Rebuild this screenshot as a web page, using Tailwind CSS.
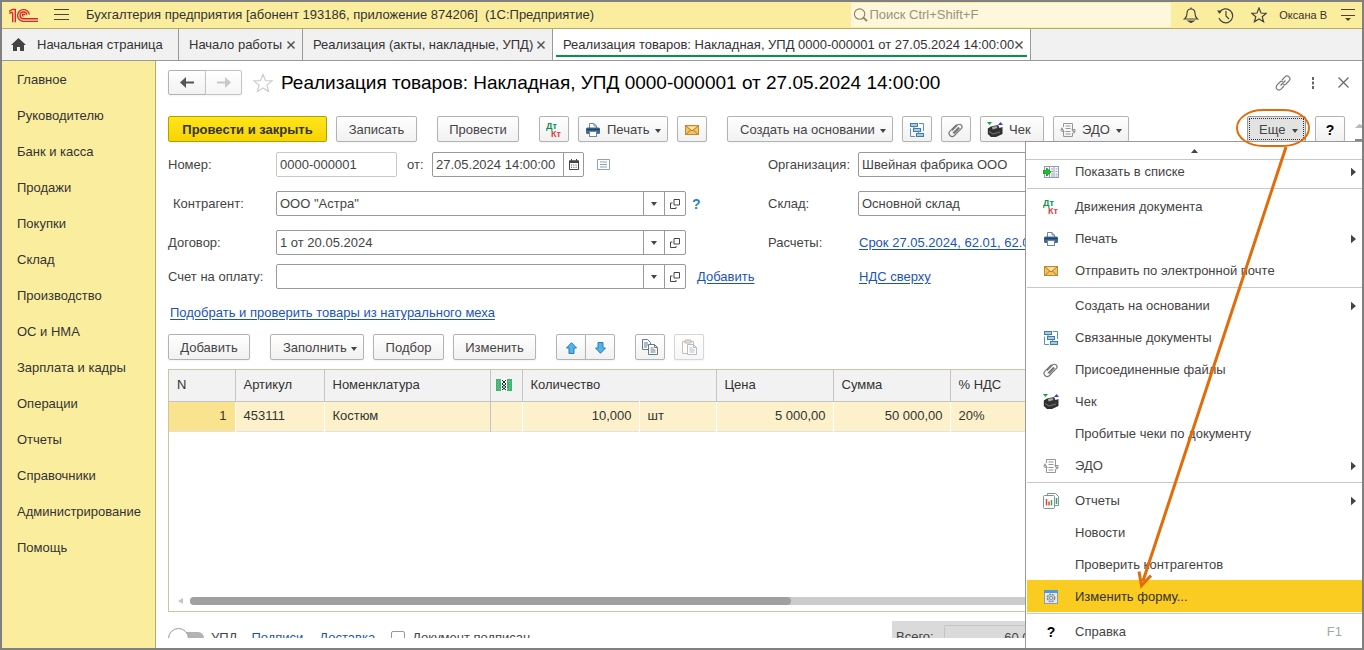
<!DOCTYPE html>
<html lang="ru">
<head>
<meta charset="utf-8">
<title>Бухгалтерия предприятия</title>
<script src="https://cdn.jsdelivr.net/npm/@tailwindcss/browser@4"></script>
</head>
<body class="h-screen overflow-hidden bg-white font-['Liberation_Sans',Arial,sans-serif] text-[13px] leading-4 text-[#444444]">
<svg class="hidden">
  <symbol id="i-dtkt" viewBox="0 0 16 16"><text x="0" y="7" font-size="9" font-weight="bold" font-family="Liberation Sans, sans-serif" fill="#0a9150">Дт</text><text x="5" y="15" font-size="9" font-weight="bold" font-family="Liberation Sans, sans-serif" fill="#e0403c">Кт</text></symbol>
  <symbol id="i-print" viewBox="0 0 16 16"><path d="M4.500 6V1.500h4.500l2.500 2.500v2" fill="#fff" stroke="#6f86a3"/><path d="M9 1.500V4h2.500" fill="none" stroke="#6f86a3"/><rect x="1" y="5.500" width="14" height="6.500" rx="1.500" fill="#3f6a94"/><path d="M1.500 7.500h13" stroke="#1d4468" stroke-width="1.500"/><rect x="4.500" y="9.500" width="7" height="5" fill="#fff" stroke="#6f86a3"/></symbol>
  <symbol id="i-mail" viewBox="0 0 16 16"><rect x="1.500" y="3.500" width="13" height="9" fill="#f5c263" stroke="#c08a33"/><path d="M3 4.500h10L8 8.500z" fill="#fde2a4"/><path d="M2 4l6 5 6-5M2 12.500l4.500-4.500M14 12.500L9.500 8" fill="none" stroke="#b27a26"/></symbol>
  <symbol id="i-rel" viewBox="0 0 16 16"><g fill="#a9cbe6" stroke="#3f7cab"><rect x="1.500" y="1.500" width="7" height="3"/><rect x="4.500" y="6.500" width="7" height="3"/><rect x="7.500" y="11.500" width="7" height="3"/></g><path d="M10 1.500h4.500V9M1.500 6.500v8H6M5 4.500v2M9.500 9.500v2" fill="none" stroke="#5a92bd"/></symbol>
  <symbol id="i-clip" viewBox="0 0 16 16"><path d="M4 8.500l5.500-5.500a2.600 2.600 0 0 1 3.700 3.700l-6.800 6.800a3.100 3.100 0 0 1-4.400-4.400L8.500 2.600M4.800 11.200l6-6M6 11.500l5.500-5.500" fill="none" stroke="#777" stroke-width="1.200"/></symbol>
  <symbol id="i-chek" viewBox="0 0 16 16"><path d="M4 4.500l7-1.500 1.500 3 3-1v7L9 15H4L.8 12V6.500z" fill="#303030"/><path d="M5 5l4.500-1 1 2-5 1.500z" fill="#a8a8a8"/><path d="M2 9.500l4 2.500 7-2" fill="none" stroke="#777"/><path d="M0 0h5L2.500 3z" fill="#12a04c"/><path d="M11 3h5L13.500 0z" fill="#3540c9"/></symbol>
  <symbol id="i-edo" viewBox="0 0 16 16" fill="none" stroke="#979797"><path d="M3.500 5V1.500h9V9M12.500 11v3.500h-9V8M5.500 4h5M5.500 6.500h5M5.500 9.500h5M5.500 12h5"/><path d="M1.500 9.500h3M11.500 7.500h4"/><path d="M0 8.500h4L2 5zM12 8.500h4L14 12z" fill="#979797" stroke="none"/></symbol>
  <symbol id="i-list" viewBox="0 0 16 16"><rect x="1.500" y="2.500" width="14" height="11" fill="#fff" stroke="#8b9cb5"/><path d="M6.500 2.500v11M11 2.500v11M3 5h2M8 5h2M12.500 5h2M8 7.500h2M12.500 7.500h2M3 11.500h2M8 10h2M12.500 10h2M8 12h2M12.500 12h2" stroke="#8b9cb5"/><path d="M0 6.500h3.500V4L8 8l-4.500 4V9.500H0z" fill="#17c41c" stroke="#0d7a15" stroke-width=".6"/></symbol>
  <symbol id="i-rep" viewBox="0 0 16 16"><path d="M4.500 3V.5h8l3 3v9H12" fill="#fff" stroke="#7e90a3"/><rect x=".5" y="2.500" width="11" height="13" rx="1" fill="#fff" stroke="#7e90a3"/><path d="M3.500 6v6.500" stroke="#e2443b" stroke-width="1.500"/><path d="M6 8.500v4" stroke="#e2443b" stroke-width="1.500"/><path d="M8.500 7v5.500M13.500 5v6" stroke="#3aa655" stroke-width="1.500"/></symbol>
  <symbol id="i-form" viewBox="0 0 16 16"><rect x="1.500" y="1.500" width="13" height="13" fill="#e6e9ec" stroke="#8f9cab"/><path d="M1 1h14v3H1z" fill="#4f9be0"/><circle cx="8" cy="9" r="3.700" fill="#c9ced4" stroke="#7f8a96" stroke-width="1.400" stroke-dasharray="2 1"/><circle cx="8" cy="9" r="1.500" fill="#fff" stroke="#7f8a96"/></symbol>
  <symbol id="i-open" viewBox="0 0 10 10"><path d="M4 .5h5.500V6H4zM2.500 4H.5v5.500H6V8" fill="none" stroke="#444"/></symbol>
  <symbol id="i-down" viewBox="0 0 6 4"><path d="M0 0h6L3 4z" fill="#444"/></symbol>
  <symbol id="i-x" viewBox="0 0 10 10"><path d="M1.500 1.500l7 7M8.500 1.500l-7 7" stroke="#555" stroke-width="1.500"/></symbol>
  <symbol id="i-right" viewBox="0 0 6 10"><path d="M0 0l6 5-6 5z" fill="#444"/></symbol>
</svg>

<div class="relative flex h-full flex-col border-2 border-[#808080]">
  <header class="flex h-[27px] shrink-0 items-center border-b border-[#b5a96c] bg-[#fbed9e] text-[#333333]">
    <svg class="ml-[7px] h-[15px] w-[30px]" viewBox="0 0 30 15" fill="none" stroke="#d8262c" stroke-width="1.400"><path d="M0 3.500L3 1.600M.3 5.300L3.500 4M3.700 4.500V14.300M3 1.500h3.300V14.300"/><path d="M20.300 6.500A5.900 5.900 0 1 0 14.500 13.400H29M17.800 6.800A3.400 3.400 0 1 0 14.500 10.800H29M15.500 7.200a1 1 0 1 0-1 .9" /></svg>
    <button class="ml-[15px]" aria-label="Меню"><svg class="h-[12px] w-[15px]" viewBox="0 0 15 12" stroke="#444"><path d="M0 .5h15M0 5.500h15M0 10.500h15"/></svg></button>
    <span class="ml-[17px] whitespace-pre">Бухгалтерия предприятия [абонент 193186, приложение 874206]  (1С:Предприятие)</span>
    <label class="ml-auto flex h-[24px] w-[320px] items-center bg-[#fef7dc]">
      <svg class="ml-[2px] h-[16px] w-[16px]" viewBox="0 0 16 16" fill="none" stroke="#8a8468"><circle cx="7" cy="7" r="5.500" stroke-width="1.200"/><path d="M11 11l4 3.500" stroke-width="2"/></svg>
      <input class="ml-px w-full bg-transparent placeholder-[#98937b] outline-none" placeholder="Поиск Ctrl+Shift+F" aria-label="Поиск">
    </label>
    <button class="ml-[12px]" aria-label="Уведомления"><svg class="size-4" viewBox="0 0 16 16" fill="none" stroke="#444" stroke-width="1.200"><path d="M1.500 12c2-1.500 2.500-3 2.500-5.500C4 3.500 5.500 2 8 2s4 1.500 4 4.500c0 2.500.5 4 2.500 5.500z"/><path d="M8 .5V2"/><path d="M5.500 14h5L8 15.500z" fill="#444"/></svg></button>
    <button class="ml-[18px]" aria-label="История"><svg class="size-[17px]" viewBox="0 0 17 17" fill="none" stroke="#444" stroke-width="1.200"><path d="M2.500 5.500A7 7 0 1 1 2 11M9 4v5l3 3"/><path d="M0 3.500h5L2.500 7z" fill="#444" stroke="none"/></svg></button>
    <button class="ml-[17px]" aria-label="Избранное"><svg class="size-4" viewBox="0 0 16 16" fill="none" stroke="#444" stroke-width="1.200"><path d="M8 1l2 5 5.300.3-4.100 3.400 1.400 5.100L8 12l-4.600 2.800 1.400-5.100L.7 6.300 6 6z"/></svg></button>
    <span class="ml-[12px] text-[11px]">Оксана В</span>
    <button class="mr-[7px] ml-[14px]" aria-label="Настройки"><svg class="h-[12px] w-[14px]" viewBox="0 0 14 12"><path d="M0 .5h14M0 6.500h14" stroke="#444"/><path d="M4 9h6l-3 3z" fill="#444"/></svg></button>
  </header>

  <nav class="flex h-[32px] shrink-0 border-b border-[#999999] bg-[#f1f1f1] whitespace-nowrap text-[#333333]">
    <a href="#" class="flex w-[177px] items-center border-r border-[#999999] pl-[9px]"><svg class="mr-[11px] h-[13px] w-[15px]" viewBox="0 0 15 13" fill="#444"><path d="M7.500 0L15 7h-2v6H9V9H6v4H2V7H0z"/></svg>Начальная страница</a>
    <div class="flex w-[124px] items-center justify-between border-r border-[#999999] pr-[6px] pl-[10px]"><a href="#">Начало работы</a><button aria-label="Закрыть"><svg class="size-[10px]"><use href="#i-x"/></svg></button></div>
    <div class="flex w-[250px] items-center justify-between border-r border-[#999999] pr-[6px] pl-[10px]"><a href="#">Реализация (акты, накладные, УПД)</a><button aria-label="Закрыть"><svg class="size-[10px]"><use href="#i-x"/></svg></button></div>
    <div class="flex w-[478px] border-r border-[#999999] bg-white px-[3px] pb-[3px]"><div class="flex flex-1 items-center justify-between border-b-2 border-[#009646] pt-[5px] pl-[7px]"><a href="#">Реализация товаров: Накладная, УПД 0000-000001 от 27.05.2024 14:00:00</a><button class="mr-[3px]" aria-label="Закрыть"><svg class="size-[10px]"><use href="#i-x"/></svg></button></div></div>
  </nav>

  <div class="flex min-h-0 flex-1">
    <aside class="flex w-[154px] shrink-0 flex-col border-r border-[#b5a96c] bg-[#fbed9e] pt-px pl-[15px] text-[#333333]">
      <a href="#" class="flex h-9 items-center">Главное</a>
      <a href="#" class="flex h-9 items-center">Руководителю</a>
      <a href="#" class="flex h-9 items-center">Банк и касса</a>
      <a href="#" class="flex h-9 items-center">Продажи</a>
      <a href="#" class="flex h-9 items-center">Покупки</a>
      <a href="#" class="flex h-9 items-center">Склад</a>
      <a href="#" class="flex h-9 items-center">Производство</a>
      <a href="#" class="flex h-9 items-center">ОС и НМА</a>
      <a href="#" class="flex h-9 items-center">Зарплата и кадры</a>
      <a href="#" class="flex h-9 items-center">Операции</a>
      <a href="#" class="flex h-9 items-center">Отчеты</a>
      <a href="#" class="flex h-9 items-center">Справочники</a>
      <a href="#" class="flex h-9 items-center">Администрирование</a>
      <a href="#" class="flex h-9 items-center">Помощь</a>
    </aside>

    <main class="flex min-w-0 flex-1 flex-col pb-[10px] pl-[12px]">
      <div class="mt-[9px] flex h-[25px] shrink-0 items-center">
        <button class="flex h-[25px] w-[38px] items-center justify-center rounded-l-xs border border-[#b3b3b3] bg-linear-to-b from-white to-[#f1f1f1] shadow-xs" aria-label="Назад"><svg class="h-[11px] w-[14px]" viewBox="0 0 14 11"><path d="M0 5.500L6 0v4.500h8v2H6V11z" fill="#555"/></svg></button>
        <button class="-ml-px flex h-[25px] w-[37px] items-center justify-center rounded-r-xs border border-[#c4c4c4] bg-linear-to-b from-white to-[#f5f5f5] shadow-xs" aria-label="Вперед"><svg class="h-[11px] w-[14px]" viewBox="0 0 14 11"><path d="M14 5.500L8 0v4.500H0v2h8V11z" fill="#c8c8c8"/></svg></button>
        <button class="ml-[11px]" aria-label="В избранное"><svg class="size-5" viewBox="0 0 20 20" fill="none" stroke="#ccc" stroke-width="1.200"><path d="M10 1.500l2.500 6 6.500.4-5.100 4.200 1.700 6.300L10 15l-5.600 3.400 1.700-6.300L1 7.900l6.500-.4z"/></svg></button>
        <h1 class="ml-[8px] text-[19px] leading-6 whitespace-nowrap text-black">Реализация товаров: Накладная, УПД 0000-000001 от 27.05.2024 14:00:00</h1>
        <button class="ml-auto" aria-label="Ссылка"><svg class="size-4" viewBox="0 0 16 16" fill="none" stroke="#777" stroke-width="1.200"><path d="M7 5l3-3.200a2.700 2.700 0 0 1 4 4L11 9a2.700 2.700 0 0 1-3 .5M9 11l-3 3.200a2.700 2.700 0 0 1-4-4L5 7a2.700 2.700 0 0 1 3-.5M5.500 10.500l5-5"/></svg></button>
        <button class="ml-[20px]" aria-label="Еще"><svg class="h-[12px] w-[4px]" viewBox="0 0 4 12" fill="#666"><path d="M1 0h2v3H1zM1 4.500h2v3H1zM1 9h2v3H1z"/></svg></button>
        <button class="mr-[13px] ml-[23px]" aria-label="Закрыть"><svg class="size-[11px]" viewBox="0 0 11 11"><path d="M.5.5l10 10M10.500.5l-10 10" stroke="#666" stroke-width="1.200"/></svg></button>
      </div>

      <div class="mt-[21px] flex h-[26px] shrink-0 gap-[9px] whitespace-nowrap">
        <button class="w-[159px] rounded-xs border border-[#b39f00] bg-linear-to-b from-[#ffe51a] to-[#f7d400] pt-px font-bold text-[#333333] shadow-xs">Провести и закрыть</button>
        <button class="w-[81px] rounded-xs border border-[#b3b3b3] bg-linear-to-b from-white to-[#f1f1f1] pt-px shadow-xs">Записать</button>
        <button class="ml-[11px] w-[82px] rounded-xs border border-[#b3b3b3] bg-linear-to-b from-white to-[#f1f1f1] pt-px shadow-xs">Провести</button>
        <button class="ml-[11px] flex w-[30px] items-center justify-center rounded-xs border border-[#b3b3b3] bg-linear-to-b from-white to-[#f1f1f1] pt-px shadow-xs" aria-label="Движения документа"><svg class="size-4"><use href="#i-dtkt"/></svg></button>
        <button class="flex w-[90px] items-center rounded-xs border border-[#b3b3b3] bg-linear-to-b from-white to-[#f1f1f1] pt-px pl-[6px] shadow-xs"><svg class="mr-[6px] size-4"><use href="#i-print"/></svg>Печать<svg class="mt-[2px] ml-auto mr-[6px] h-[4px] w-[6px]"><use href="#i-down"/></svg></button>
        <button class="flex w-[30px] items-center justify-center rounded-xs border border-[#b3b3b3] bg-linear-to-b from-white to-[#f1f1f1] pt-px shadow-xs" aria-label="Отправить"><svg class="size-4"><use href="#i-mail"/></svg></button>
        <button class="ml-[11px] flex w-[166px] items-center rounded-xs border border-[#b3b3b3] bg-linear-to-b from-white to-[#f1f1f1] pt-px pl-[12px] shadow-xs">Создать на основании<svg class="mt-[2px] ml-auto mr-[6px] h-[4px] w-[6px]"><use href="#i-down"/></svg></button>
        <button class="flex w-[30px] items-center justify-center rounded-xs border border-[#b3b3b3] bg-linear-to-b from-white to-[#f1f1f1] pt-px shadow-xs" aria-label="Связанные документы"><svg class="size-4"><use href="#i-rel"/></svg></button>
        <button class="flex w-[30px] items-center justify-center rounded-xs border border-[#b3b3b3] bg-linear-to-b from-white to-[#f1f1f1] pt-px shadow-xs" aria-label="Присоединенные файлы"><svg class="size-4"><use href="#i-clip"/></svg></button>
        <button class="flex w-[64px] items-center rounded-xs border border-[#b3b3b3] bg-linear-to-b from-white to-[#f1f1f1] pt-px pl-[6px] shadow-xs"><svg class="mr-[6px] size-4"><use href="#i-chek"/></svg>Чек</button>
        <button class="flex w-[76px] items-center rounded-xs border border-[#b3b3b3] bg-linear-to-b from-white to-[#f1f1f1] pt-px pl-[6px] shadow-xs"><svg class="mr-[6px] size-4"><use href="#i-edo"/></svg>ЭДО<svg class="mt-[2px] ml-auto mr-[6px] h-[4px] w-[6px]"><use href="#i-down"/></svg></button>
        <button class="ml-auto flex w-[59px] items-center rounded-xs border border-[#999999] bg-[#e2e2e2] p-px"><span class="flex h-full w-full items-center border border-dotted border-[#333333] pt-px pl-[9px]">Еще<svg class="mt-[2px] ml-auto mr-[5px] h-[4px] w-[6px]"><use href="#i-down"/></svg></span></button>
        <button class="w-[30px] rounded-xs border border-[#b3b3b3] bg-linear-to-b from-white to-[#f1f1f1] pt-px text-[14px] font-bold text-black shadow-xs">?</button>
        <svg class="mt-[8px] h-[18px] w-[8px]" viewBox="0 0 8 18"><path d="M1 4h7V1L5 0z" fill="#bbb"/><path d="M1 15h7v3H1z" fill="#888"/></svg>
      </div>

      <div class="mt-[10px] flex shrink-0">
        <div class="w-[600px] shrink-0">
          <div class="flex h-[25px] items-center">
            <label for="num" class="w-[108px]">Номер:</label>
            <input id="num" class="h-[25px] w-[121px] rounded-xs border border-[#c8c8c8] bg-white px-[3px] outline-none" value="0000-000001">
            <label for="date" class="ml-[10px]">от:</label>
            <div class="ml-auto flex h-[25px] w-[152px] rounded-xs border border-[#999999]">
              <input id="date" class="w-[130px] min-w-0 px-[3px] outline-none" value="27.05.2024 14:00:00">
              <button class="flex flex-1 items-center justify-center border-l border-[#999999]" aria-label="Календарь"><svg class="h-[11px] w-[10px]" viewBox="0 0 10 11"><path d="M.5 2h9v8.500h-9zM2.500 0v2M7.500 0v2" fill="none" stroke="#444"/><path d="M0 1.500h10V4H0z" fill="#444"/><path d="M2 6h6M2 8.300h6" stroke="#444" stroke-dasharray="1 1.300"/></svg></button>
            </div>
            <button class="mr-[158px] ml-[13px]" aria-label="Сведения"><svg class="h-[11px] w-[13px]" viewBox="0 0 13 11"><path d="M.5.5h12v10H.5z" fill="#fff" stroke="#8fa3b8"/><path d="M3 3h7M3 5.500h7M3 8h7" stroke="#8fa3b8"/></svg></button>
          </div>
          <div class="mt-[14px] flex h-[25px] items-center">
            <label for="agent" class="w-[108px] pl-[5px]">Контрагент:</label>
            <div class="flex h-[25px] w-[410px] rounded-xs border border-[#999999]">
              <input id="agent" class="min-w-0 flex-1 px-[3px] outline-none" value="ООО &quot;Астра&quot;">
              <button class="flex w-[21px] items-center justify-center border-l border-[#999999]" aria-label="Выбрать"><svg class="h-[4px] w-[6px]"><use href="#i-down"/></svg></button>
              <button class="flex w-[21px] items-center justify-center border-l border-[#999999]" aria-label="Открыть"><svg class="size-[10px]"><use href="#i-open"/></svg></button>
            </div>
            <a href="#" class="ml-[6px] text-[14px] font-bold text-[#1c86cc]">?</a>
          </div>
          <div class="mt-[14px] flex h-[25px] items-center">
            <label for="contract" class="w-[108px]">Договор:</label>
            <div class="flex h-[25px] w-[410px] rounded-xs border border-[#999999]">
              <input id="contract" class="min-w-0 flex-1 px-[3px] outline-none" value="1 от 20.05.2024">
              <button class="flex w-[21px] items-center justify-center border-l border-[#999999]" aria-label="Выбрать"><svg class="h-[4px] w-[6px]"><use href="#i-down"/></svg></button>
              <button class="flex w-[21px] items-center justify-center border-l border-[#999999]" aria-label="Открыть"><svg class="size-[10px]"><use href="#i-open"/></svg></button>
            </div>
          </div>
          <div class="mt-[9px] flex h-[25px] items-center">
            <label for="bill" class="w-[108px] whitespace-nowrap">Счет на оплату:</label>
            <div class="flex h-[25px] w-[410px] rounded-xs border border-[#999999]">
              <input id="bill" class="min-w-0 flex-1 px-[3px] outline-none" value="">
              <button class="flex w-[21px] items-center justify-center border-l border-[#999999]" aria-label="Выбрать"><svg class="h-[4px] w-[6px]"><use href="#i-down"/></svg></button>
              <button class="flex w-[21px] items-center justify-center border-l border-[#999999]" aria-label="Открыть"><svg class="size-[10px]"><use href="#i-open"/></svg></button>
            </div>
            <a href="#" class="ml-[11px] text-[#1a55b5] underline underline-offset-2">Добавить</a>
          </div>
        </div>
        <div class="min-w-0 flex-1 pr-[18px]">
          <div class="flex h-[25px] items-center">
            <label for="org" class="w-[90px] shrink-0">Организация:</label>
            <input id="org" class="h-[25px] w-full rounded-xs border border-[#999999] px-[3px] outline-none" value="Швейная фабрика ООО">
          </div>
          <div class="mt-[14px] flex h-[25px] items-center">
            <label for="stock" class="w-[90px] shrink-0">Склад:</label>
            <input id="stock" class="h-[25px] w-full rounded-xs border border-[#999999] px-[3px] outline-none" value="Основной склад">
          </div>
          <div class="mt-[14px] flex h-[25px] items-center whitespace-nowrap">
            <span class="w-[91px] shrink-0">Расчеты:</span>
            <a href="#" class="text-[#1a55b5] underline underline-offset-2">Срок 27.05.2024, 62.01, 62.02</a>
          </div>
          <div class="mt-[9px] flex h-[25px] items-center pl-[91px]">
            <a href="#" class="text-[#1a55b5] underline underline-offset-2">НДС сверху</a>
          </div>
        </div>
      </div>

      <a href="#" class="mt-[16px] ml-[2px] self-start text-[#1a55b5] underline underline-offset-2">Подобрать и проверить товары из натурального меха</a>

      <div class="mt-[13px] flex h-[26px] shrink-0">
        <button class="w-[82px] rounded-xs border border-[#b3b3b3] bg-linear-to-b from-white to-[#f1f1f1] pt-px shadow-xs">Добавить</button>
        <button class="ml-[20px] flex w-[94px] items-center rounded-xs border border-[#b3b3b3] bg-linear-to-b from-white to-[#f1f1f1] pt-px pl-[12px] shadow-xs">Заполнить<svg class="mt-[2px] ml-auto mr-[6px] h-[4px] w-[6px]"><use href="#i-down"/></svg></button>
        <button class="ml-[9px] w-[71px] rounded-xs border border-[#b3b3b3] bg-linear-to-b from-white to-[#f1f1f1] pt-px shadow-xs">Подбор</button>
        <button class="ml-[9px] w-[83px] rounded-xs border border-[#b3b3b3] bg-linear-to-b from-white to-[#f1f1f1] pt-px shadow-xs">Изменить</button>
        <button class="ml-[20px] flex w-[30px] items-center justify-center rounded-l-xs border border-[#b3b3b3] bg-linear-to-b from-white to-[#f1f1f1] pt-px shadow-xs" aria-label="Вверх"><svg class="h-[12px] w-[11px]" viewBox="0 0 11 12"><path d="M5.500.7L10.500 6H8v5.500H3V6H.5z" fill="#4db4f0" stroke="#2d7bb0"/></svg></button>
        <button class="-ml-px flex w-[30px] items-center justify-center rounded-r-xs border border-[#b3b3b3] bg-linear-to-b from-white to-[#f1f1f1] pt-px shadow-xs" aria-label="Вниз"><svg class="h-[12px] w-[11px]" viewBox="0 0 11 12"><path d="M5.500 11.300L.5 6H3V.5h5V6h2.500z" fill="#4db4f0" stroke="#2d7bb0"/></svg></button>
        <button class="ml-[20px] flex w-[30px] items-center justify-center rounded-xs border border-[#b3b3b3] bg-linear-to-b from-white to-[#f1f1f1] shadow-xs" aria-label="Копировать"><svg class="size-4" viewBox="0 0 16 16" fill="#fff" stroke="#66788f"><path d="M.5.500h5l3 3v7h-8zM2 4h4M2 6h5M2 8h3"/><path d="M6.500 5.500h6l3 3v7h-9zM12.500 5.500v3h3M8.500 9h3M8.500 11h5M8.500 13h5"/></svg></button>
        <button class="ml-[9px] flex w-[30px] items-center justify-center rounded-xs border border-[#d6d6d6] bg-linear-to-b from-white to-[#f6f6f6] shadow-xs" aria-label="Вставить"><svg class="size-4" viewBox="0 0 16 16" fill="#fff"><path d="M1.500 2.500h11v12h-11z" stroke="#dfb6a0"/><path d="M4 1h6v3H4z" fill="#ddd" stroke="#bbb"/><path d="M6.500 5.500h6l3 3v7h-9zM12.500 5.500v3h3M8.500 9h3M8.500 11h5M8.500 13h5" stroke="#b3bcc8"/></svg></button>
      </div>

      <div class="mt-[9px] mr-[17px] flex min-h-0 flex-1 flex-col border border-[#cdc4a0]">
        <table class="w-full table-fixed border-collapse text-left whitespace-nowrap text-[#333333]">
          <colgroup><col class="w-[66px]"><col class="w-[89px]"><col class="w-[166px]"><col class="w-[32px]"><col class="w-[117px]"><col class="w-[77px]"><col class="w-[117px]"><col class="w-[117px]"><col></colgroup>
          <thead>
            <tr class="h-[31px] border-b border-[#c4c4c4] bg-[#f2f2f2]">
              <th class="border-r border-[#c4c4c4] px-[8px] font-normal">N</th>
              <th class="border-r border-[#c4c4c4] px-[8px] font-normal">Артикул</th>
              <th class="border-r border-[#c4c4c4] px-[8px] font-normal">Номенклатура</th>
              <th class="border-r border-[#c4c4c4] pl-[5px]"><svg class="h-[12px] w-[16px]" viewBox="0 0 16 12"><path d="M0 0h16v12H0z" fill="#3cb46e"/><path d="M2 2h12v8H2z" fill="none" stroke="#7ad3a0" stroke-dasharray="1 1"/><path d="M5 0h6v12H5z" fill="#fff"/><path d="M6 1l4 4-4 3 4 3M10 1L6 5l4 3-4 3" fill="none" stroke="#222"/></svg></th>
              <th colspan="2" class="border-r border-[#c4c4c4] px-[8px] font-normal">Количество</th>
              <th class="border-r border-[#c4c4c4] px-[8px] font-normal">Цена</th>
              <th class="border-r border-[#c4c4c4] px-[8px] font-normal">Сумма</th>
              <th class="px-[8px] font-normal">% НДС</th>
            </tr>
          </thead>
          <tbody>
            <tr class="h-[30px] border-b border-[#e2e2e2] bg-[#fdf1cb]">
              <td class="border-r border-white bg-[#fae38f] px-[8px] text-right">1</td>
              <td class="border-r border-white px-[8px]">453111</td>
              <td class="border-r border-[#c4c4c4] px-[8px]">Костюм</td>
              <td class="border-r border-white"></td>
              <td class="border-r border-white px-[7px] text-right">10,000</td>
              <td class="border-r border-white px-[8px]">шт</td>
              <td class="border-r border-white px-[7px] text-right">5 000,00</td>
              <td class="border-r border-white px-[7px] text-right">50 000,00</td>
              <td class="px-[8px]">20%</td>
            </tr>
          </tbody>
        </table>
        <div class="mt-auto mb-[6px] flex items-center pl-[9px]">
          <svg class="mr-[7px] h-[6px] w-[5px]" viewBox="0 0 5 6"><path d="M5 0v6L0 3z" fill="#c4c4c4"/></svg>
          <div class="h-[8px] flex-1 rounded-full bg-[#cccccc]"><div class="h-[8px] w-[601px] rounded-full bg-[#a0a0a0]"></div></div>
        </div>
      </div>

      <div class="flex h-[26px] shrink-0 items-start overflow-hidden whitespace-nowrap">
        <label class="mt-4 flex h-5 items-center gap-[7px]"><span class="relative flex h-5 w-9 items-center"><input type="checkbox" role="switch" class="ml-1 h-3 w-8 appearance-none rounded-full bg-[#b3b3b3]"><span class="absolute top-0 left-0 size-[21px] rounded-full border border-[#999999] bg-white"></span></span>УПД</label>
        <a href="#" class="mt-[18px] ml-[14px] text-[#1a55b5] underline underline-offset-2">Подписи</a>
        <a href="#" class="mt-[18px] ml-[16px] text-[#1a55b5] underline underline-offset-2">Доставка</a>
        <label class="mt-4 ml-[16px] flex h-5 items-center gap-[7px]"><input type="checkbox" class="size-[14px] appearance-none rounded-xs border border-[#999999] bg-white">Документ подписан</label>
        <div class="mt-[9px] mr-[17px] ml-auto flex h-8 w-[453px] items-center bg-[#dadada] pl-[4px]"><label for="total" class="w-[48px]">Всего:</label><input id="total" class="h-[24px] w-[120px] rounded-xs border border-[#c4c4c4] pr-[1px] text-right outline-none" value="60 000,00"></div>
      </div>
    </main>
  </div>

  <!-- Выпадающее меню «Еще» -->
  <div class="absolute top-[139px] right-0 bottom-0 w-[337px] border-t border-l border-[#999999] bg-white">
    <button class="flex h-[18px] w-full items-center justify-center border-b border-[#c8c8c8]" aria-label="Прокрутить вверх"><svg class="h-[4px] w-[7px]" viewBox="0 0 7 4"><path d="M0 4h7L3.500 0z" fill="#444"/></svg></button>
    <div role="menu" class="pl-px whitespace-nowrap">
      <div class="flex h-[27px] flex-col justify-end overflow-hidden"><button role="menuitem" class="flex h-8 w-full shrink-0 items-center pt-px pr-[6px] pl-4"><svg class="mr-4 size-4"><use href="#i-list"/></svg>Показать в списке<svg class="ml-auto h-[10px] w-[5px]"><use href="#i-right"/></svg></button></div>
      <hr class="my-px border-[#c8c8c8]">
      <button role="menuitem" class="flex h-8 w-full items-center pt-px pr-[6px] pl-4"><svg class="mr-4 size-4"><use href="#i-dtkt"/></svg>Движения документа</button>
      <button role="menuitem" class="flex h-8 w-full items-center pt-px pr-[6px] pl-4"><svg class="mr-4 size-4"><use href="#i-print"/></svg>Печать<svg class="ml-auto h-[10px] w-[5px]"><use href="#i-right"/></svg></button>
      <button role="menuitem" class="flex h-8 w-full items-center pt-px pr-[6px] pl-4"><svg class="mr-4 size-4"><use href="#i-mail"/></svg>Отправить по электронной почте</button>
      <hr class="my-px border-[#c8c8c8]">
      <button role="menuitem" class="flex h-8 w-full items-center pt-px pr-[6px] pl-12">Создать на основании<svg class="ml-auto h-[10px] w-[5px]"><use href="#i-right"/></svg></button>
      <button role="menuitem" class="flex h-8 w-full items-center pt-px pr-[6px] pl-4"><svg class="mr-4 size-4"><use href="#i-rel"/></svg>Связанные документы</button>
      <button role="menuitem" class="flex h-8 w-full items-center pt-px pr-[6px] pl-4"><svg class="mr-4 size-4"><use href="#i-clip"/></svg>Присоединенные файлы</button>
      <button role="menuitem" class="flex h-8 w-full items-center pt-px pr-[6px] pl-4"><svg class="mr-4 size-4"><use href="#i-chek"/></svg>Чек</button>
      <button role="menuitem" class="flex h-8 w-full items-center pt-px pr-[6px] pl-12">Пробитые чеки по документу</button>
      <button role="menuitem" class="flex h-8 w-full items-center pt-px pr-[6px] pl-4"><svg class="mr-4 size-4"><use href="#i-edo"/></svg>ЭДО<svg class="ml-auto h-[10px] w-[5px]"><use href="#i-right"/></svg></button>
      <hr class="my-px border-[#c8c8c8]">
      <button role="menuitem" class="flex h-8 w-full items-center pt-px pr-[6px] pl-4"><svg class="mr-4 size-4"><use href="#i-rep"/></svg>Отчеты<svg class="ml-auto h-[10px] w-[5px]"><use href="#i-right"/></svg></button>
      <button role="menuitem" class="flex h-8 w-full items-center pt-px pr-[6px] pl-12">Новости</button>
      <button role="menuitem" class="flex h-8 w-full items-center pt-px pr-[6px] pl-12">Проверить контрагентов</button>
      <button role="menuitem" class="flex h-8 w-full items-center bg-[#facb20] pt-px pr-[6px] pl-4 text-[#333333]"><svg class="mr-4 size-4"><use href="#i-form"/></svg>Изменить форму...</button>
      <hr class="my-px border-[#c8c8c8]">
      <button role="menuitem" class="flex h-8 w-full items-center pt-px pr-[20px] pl-4"><span class="mr-4 w-4 text-center text-[14px] font-bold text-black">?</span>Справка<span class="ml-auto text-[#a6a6a6]">F1</span></button>
    </div>
  </div>

  <!-- Выноска со стрелкой к пункту меню -->
  <svg class="pointer-events-none absolute top-[98px] right-0 h-[500px] w-[262px]" viewBox="0 0 262 500" fill="none" stroke="#e36c0a"><rect x="137" y="10" width="72" height="36" rx="26" ry="18" stroke-width="2"/><path d="M186 47L43 481" stroke-width="3"/><path d="M39 471.500L41.500 485.500L51 475.500" stroke-width="3"/></svg>
</div>
</body>
</html>
